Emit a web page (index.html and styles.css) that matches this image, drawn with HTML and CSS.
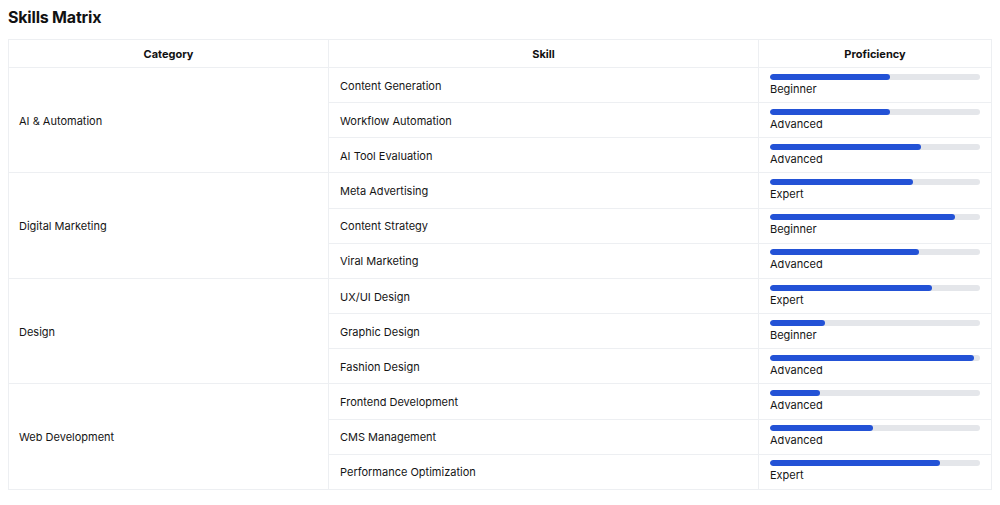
FILE: index.html
```html
<!DOCTYPE html>
<html lang="en">
<head>
<meta charset="utf-8">
<title>Skills Matrix</title>
<link rel="stylesheet" href="styles.css">
</head>
<body>
<h2 class="title">Skills Matrix</h2>
<table class="matrix">
  <colgroup>
    <col class="c-cat"><col class="c-skill"><col class="c-prof">
  </colgroup>
  <thead>
    <tr><th>Category</th><th>Skill</th><th>Proficiency</th></tr>
  </thead>
  <tbody>
    <tr><td class="cat" rowspan="3">AI &amp; Automation</td><td class="skill">Content Generation</td><td class="prof"><div class="track"><div class="fill" style="width:57%"></div></div><div class="lvl">Beginner</div></td></tr>
    <tr><td class="skill">Workflow Automation</td><td class="prof"><div class="track"><div class="fill" style="width:57%"></div></div><div class="lvl">Advanced</div></td></tr>
    <tr><td class="skill">AI Tool Evaluation</td><td class="prof"><div class="track"><div class="fill" style="width:72%"></div></div><div class="lvl">Advanced</div></td></tr>

    <tr><td class="cat" rowspan="3">Digital Marketing</td><td class="skill">Meta Advertising</td><td class="prof"><div class="track"><div class="fill" style="width:68%"></div></div><div class="lvl">Expert</div></td></tr>
    <tr><td class="skill">Content Strategy</td><td class="prof"><div class="track"><div class="fill" style="width:88%"></div></div><div class="lvl">Beginner</div></td></tr>
    <tr><td class="skill">Viral Marketing</td><td class="prof"><div class="track"><div class="fill" style="width:71%"></div></div><div class="lvl">Advanced</div></td></tr>

    <tr><td class="cat" rowspan="3">Design</td><td class="skill">UX/UI Design</td><td class="prof"><div class="track"><div class="fill" style="width:77%"></div></div><div class="lvl">Expert</div></td></tr>
    <tr><td class="skill">Graphic Design</td><td class="prof"><div class="track"><div class="fill" style="width:26%"></div></div><div class="lvl">Beginner</div></td></tr>
    <tr><td class="skill">Fashion Design</td><td class="prof"><div class="track"><div class="fill" style="width:97%"></div></div><div class="lvl">Advanced</div></td></tr>

    <tr><td class="cat" rowspan="3">Web Development</td><td class="skill">Frontend Development</td><td class="prof"><div class="track"><div class="fill" style="width:24%"></div></div><div class="lvl">Advanced</div></td></tr>
    <tr><td class="skill">CMS Management</td><td class="prof"><div class="track"><div class="fill" style="width:49%"></div></div><div class="lvl">Advanced</div></td></tr>
    <tr><td class="skill">Performance Optimization</td><td class="prof"><div class="track"><div class="fill" style="width:81%"></div></div><div class="lvl">Expert</div></td></tr>
  </tbody>
</table>
</body>
</html>
```

FILE: styles.css
```css
html, body {
  margin: 0;
  padding: 0;
  background: #ffffff;
}
body {
  padding: 7px 8px 0 8px;
  font-family: "Inter", "Liberation Sans", Arial, sans-serif;
  color: #151515;
}
.title {
  margin: 0 0 12px 0;
  font-size: 16px;
  line-height: 20px;
  font-weight: 700;
  letter-spacing: -0.2px;
  color: #111;
}
.matrix {
  width: 983px;
  border-collapse: collapse;
  table-layout: fixed;
  font-size: 11px;
}
.c-cat { width: 320px; }
.c-skill { width: 430px; }
.c-prof { width: 233px; }
.matrix th,
.matrix td {
  border: 1px solid #edeff2;
  text-align: left;
  vertical-align: middle;
}
.matrix th {
  height: 27px;
  padding: 0 12px;
  text-align: center;
  font-weight: 700;
  font-size: 11px;
  color: #111;
}
.matrix td {
  height: 33.17px;
  padding: 1px 11px 0 11px;
  font-weight: 400;
}
.matrix td.cat {
  padding-left: 10px;
}
.matrix td.prof {
  padding: 0 11px 1px 11px;
}
.track {
  height: 6px;
  border-radius: 3px;
  background: #e4e6ea;
  overflow: hidden;
}
.fill {
  height: 100%;
  border-radius: 3px;
  background: #2352d6;
}
.lvl {
  margin-top: 2px;
  line-height: 14px;
  font-size: 11px;
}
```
